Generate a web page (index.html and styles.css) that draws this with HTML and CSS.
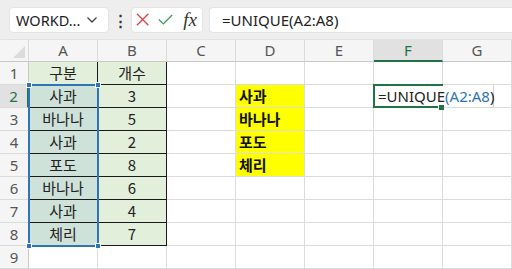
FILE: index.html
```html
<!DOCTYPE html>
<html>
<head>
  <title>UNIQUE</title>
  <link rel="stylesheet" href="styles.css">
</head>
<body>
  <div class="toolbar">
    <div class="namebox">
      <span>WORKD...</span>
      <svg class="chev" width="12" height="8" viewBox="0 0 12 8"><path d="M1.5 1.5 L6 6 L10.5 1.5" fill="none" stroke="#444" stroke-width="1.3"/></svg>
    </div>
    <div class="dots">&#8942;</div>
    <div class="btnbox">
      <svg width="15" height="15" viewBox="0 0 15 15"><path d="M1 1 L14 14 M14 1 L1 14" stroke="#e04444" stroke-width="1.5"/></svg>
      <svg width="17" height="13" viewBox="0 0 17 13"><path d="M1 6.5 L6 11.5 L16 1.5" fill="none" stroke="#3a9a5c" stroke-width="1.5"/></svg>
      <span class="fx">fx</span>
    </div>
    <div class="formula">=UNIQUE(A2:A8)</div>
  </div>

  <div class="sheet">
    <div class="corner"><div class="tri"></div></div>
    <div class="colhead">A</div>
    <div class="colhead">B</div>
    <div class="colhead">C</div>
    <div class="colhead">D</div>
    <div class="colhead">E</div>
    <div class="colhead active">F</div>
    <div class="colhead">G</div>

    <div class="rowhead">1</div>
    <div class="cell tbl c">구분</div>
    <div class="cell tbl c">개수</div>
    <div class="cell"></div><div class="cell"></div><div class="cell"></div><div class="cell"></div><div class="cell"></div>

    <div class="rowhead active">2</div>
    <div class="cell tbl sel c">사과</div>
    <div class="cell tbl c">3</div>
    <div class="cell"></div>
    <div class="cell yellow">사과</div>
    <div class="cell"></div>
    <div class="cell edit">
      <span class="editbox">=UNIQUE<span class="ref">(A2:A8</span>)</span>
      <span class="activebox"><i class="handle"></i></span>
    </div>
    <div class="cell"></div>

    <div class="rowhead">3</div>
    <div class="cell tbl sel c">바나나</div>
    <div class="cell tbl c">5</div>
    <div class="cell"></div>
    <div class="cell yellow">바나나</div>
    <div class="cell"></div><div class="cell"></div><div class="cell"></div>

    <div class="rowhead">4</div>
    <div class="cell tbl sel c">사과</div>
    <div class="cell tbl c">2</div>
    <div class="cell"></div>
    <div class="cell yellow">포도</div>
    <div class="cell"></div><div class="cell"></div><div class="cell"></div>

    <div class="rowhead">5</div>
    <div class="cell tbl sel c">포도</div>
    <div class="cell tbl c">8</div>
    <div class="cell"></div>
    <div class="cell yellow">체리</div>
    <div class="cell"></div><div class="cell"></div><div class="cell"></div>

    <div class="rowhead">6</div>
    <div class="cell tbl sel c">바나나</div>
    <div class="cell tbl c">6</div>
    <div class="cell"></div><div class="cell"></div><div class="cell"></div><div class="cell"></div><div class="cell"></div>

    <div class="rowhead">7</div>
    <div class="cell tbl sel c">사과</div>
    <div class="cell tbl c">4</div>
    <div class="cell"></div><div class="cell"></div><div class="cell"></div><div class="cell"></div><div class="cell"></div>

    <div class="rowhead">8</div>
    <div class="cell tbl sel c">체리</div>
    <div class="cell tbl c">7</div>
    <div class="cell"></div><div class="cell"></div><div class="cell"></div><div class="cell"></div><div class="cell"></div>

    <div class="rowhead">9</div>
    <div class="cell"></div><div class="cell"></div><div class="cell"></div><div class="cell"></div><div class="cell"></div><div class="cell"></div><div class="cell"></div>

    <!-- range reference highlight A2:A8 -->
    <div class="refbox">
      <i class="h tl"></i><i class="h tr"></i><i class="h bl"></i><i class="h br"></i>
    </div>
  </div>
</body>
</html>
```

FILE: styles.css
```css
body {
  margin: 0;
  width: 512px;
  height: 269px;
  overflow: hidden;
  background: #ffffff;
  font-family: "Noto Sans", "Noto Sans CJK KR", sans-serif;
}

.toolbar {
  display: flex;
  align-items: center;
  height: 40px;
  box-sizing: border-box;
  padding: 7px 0 7px 9px;
  background: #eeeeee;
  border-bottom: 1px solid #e2e2e2;
}

.namebox {
  display: flex;
  align-items: center;
  justify-content: space-between;
  width: 100px;
  height: 26px;
  box-sizing: border-box;
  padding: 0 10px 0 6px;
  background: #ffffff;
  border-radius: 4px;
  border: 1px solid #e4e4e4;
  font-size: 14.5px;
  color: #222;
}

.dots {
  width: 22px;
  text-align: center;
  font-size: 15px;
  color: #333;
  font-weight: bold;
}

.btnbox {
  display: flex;
  align-items: center;
  gap: 9px;
  width: 72px;
  height: 26px;
  box-sizing: border-box;
  padding: 0 5px 0 4px;
  background: #ffffff;
  border-radius: 4px;
  border: 1px solid #e4e4e4;
}

.fx {
  font-family: "Liberation Serif", serif;
  font-style: italic;
  font-size: 19px;
  line-height: 20px;
  color: #333;
  margin-left: 1px;
}

.formula {
  flex: 1;
  margin-left: 6px;
  height: 26px;
  box-sizing: border-box;
  padding: 1px 0 0 12px;
  background: #ffffff;
  border-radius: 4px 0 0 4px;
  border: 1px solid #e4e4e4;
  border-right: none;
  font-size: 15px;
  line-height: 23px;
  color: #222;
}

.sheet {
  position: relative;
  display: grid;
  grid-template-columns: 29px repeat(7, 69px);
  grid-template-rows: 22px repeat(9, 23px);
}

.corner {
  background: #f5f5f5;
  border-right: 1px solid #dadada;
  border-bottom: 1px solid #c8c8c8;
  box-sizing: border-box;
  position: relative;
}

.tri {
  position: absolute;
  right: 3px;
  bottom: 3px;
  width: 0;
  height: 0;
  border-left: 12px solid transparent;
  border-bottom: 12px solid #dcdcdc;
}

.colhead {
  background: #f5f5f5;
  border-right: 1px solid #dadada;
  border-bottom: 1px solid #c8c8c8;
  box-sizing: border-box;
  text-align: center;
  font-size: 15px;
  line-height: 21px;
  color: #555;
}

.colhead.active {
  background: #e1e1e1;
  color: #217346;
  border-bottom: 2px solid #217346;
}

.rowhead {
  background: #f5f5f5;
  border-right: 1px solid #c8c8c8;
  border-bottom: 1px solid #dadada;
  box-sizing: border-box;
  text-align: center;
  font-size: 15px;
  line-height: 22px;
  color: #555;
}

.rowhead.active {
  background: #e1e1e1;
  color: #217346;
  border-right: 2px solid #217346;
}

.cell {
  border-right: 1px solid #dcdcdc;
  border-bottom: 1px solid #dcdcdc;
  box-sizing: border-box;
  font-family: "Noto Sans CJK KR", "Noto Sans", sans-serif;
  font-size: 15px;
  line-height: 22px;
  color: #222;
  white-space: nowrap;
}

.cell.c {
  text-align: center;
}

.cell.tbl {
  background: #e2efda;
  border-right: 1px solid #1a1a1a;
  border-bottom: 1px solid #1a1a1a;
}

.cell.sel {
  background: #cfe2da;
}

.cell.yellow {
  background: #ffff00;
  font-weight: bold;
  padding-left: 3px;
  color: #111;
}

.cell.edit {
  position: relative;
  z-index: 2;
}

.editbox {
  position: absolute;
  left: 0;
  top: -1px;
  height: 24px;
  width: 120px;
  box-sizing: border-box;
  padding-left: 4px;
  background: #ffffff;
  border-top: 1px solid #dcdcdc;
  border-bottom: 1px solid #dcdcdc;
  border-right: 1px solid #d0d0d0;
  line-height: 22px;
  font-family: "Noto Sans", sans-serif;
  font-size: 15px;
  color: #222;
}

.activebox {
  position: absolute;
  left: -1px;
  top: -1px;
  width: 70px;
  height: 24px;
  box-sizing: border-box;
  border: 2px solid #217346;
  border-right: none;
}

.handle {
  position: absolute;
  right: -1px;
  bottom: -4px;
  width: 5px;
  height: 5px;
  background: #217346;
  border-left: 1px solid #ffffff;
}

.ref {
  color: #2e75b6;
}

.refbox {
  position: absolute;
  left: 28px;
  top: 44px;
  width: 71px;
  height: 163px;
  box-sizing: border-box;
  border: 2px solid #2e75b6;
  pointer-events: none;
}

.h {
  position: absolute;
  width: 6px;
  height: 6px;
  background: #2e75b6;
  border: 1px solid #ffffff;
  box-sizing: border-box;
}

.h.tl { left: -4px; top: -4px; }
.h.tr { right: -4px; top: -4px; }
.h.bl { left: -4px; bottom: -4px; }
.h.br { right: -4px; bottom: -4px; }
```
